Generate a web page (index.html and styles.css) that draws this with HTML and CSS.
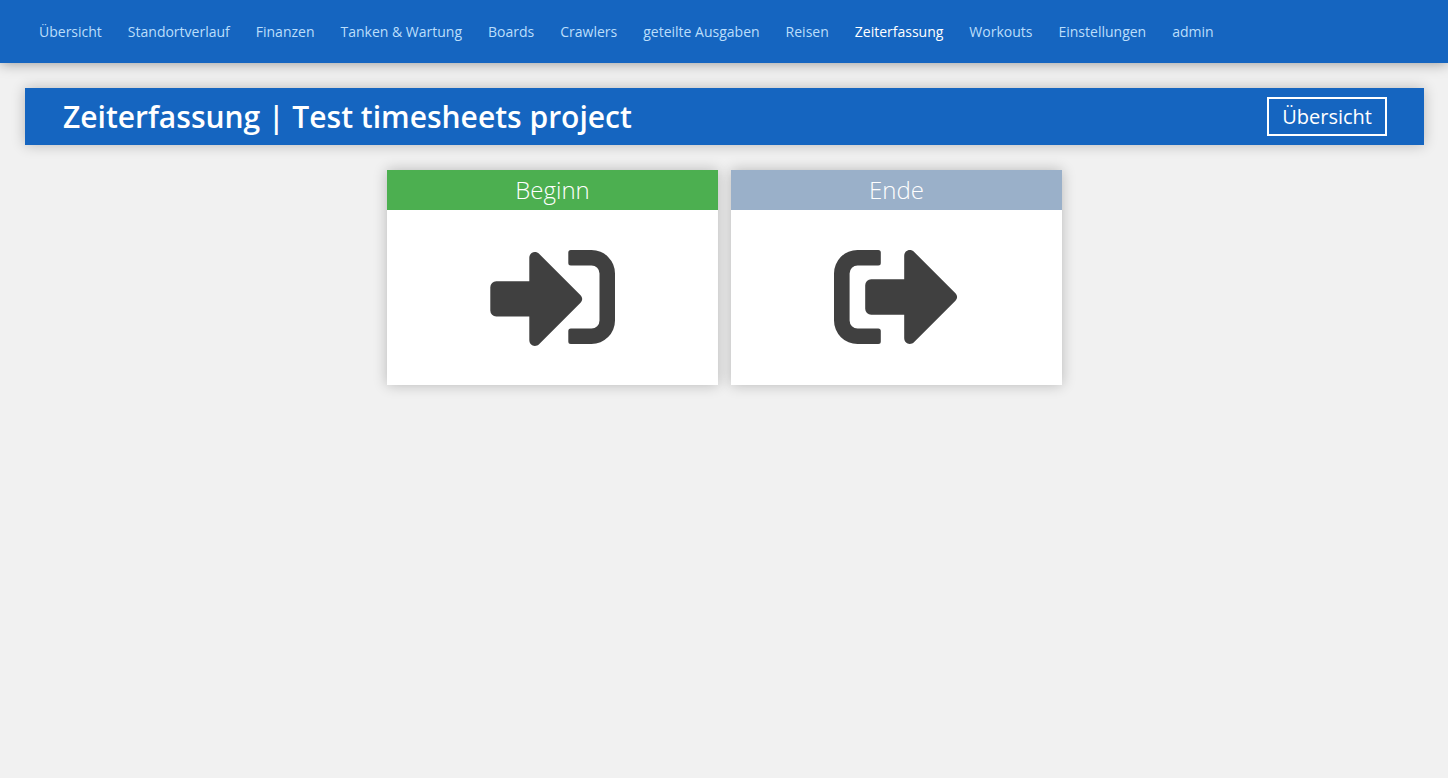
FILE: index.html
```html
<!DOCTYPE html>
<html lang="de">
<head>
<meta charset="utf-8">
<meta name="viewport" content="width=device-width, initial-scale=1">
<title>Zeiterfassung</title>
<link rel="stylesheet" href="styles.css">
</head>
<body>
<nav class="nav">
  <a href="#">Übersicht</a>
  <a href="#">Standortverlauf</a>
  <a href="#">Finanzen</a>
  <a href="#">Tanken &amp; Wartung</a>
  <a href="#">Boards</a>
  <a href="#">Crawlers</a>
  <a href="#">geteilte Ausgaben</a>
  <a href="#">Reisen</a>
  <a href="#" class="active" aria-current="page">Zeiterfassung</a>
  <a href="#">Workouts</a>
  <a href="#">Einstellungen</a>
  <a href="#">admin</a>
</nav>
<main class="main">
  <header class="title-bar">
    <h1>Zeiterfassung | Test timesheets project</h1>
    <a href="#" class="outline-button">Übersicht</a>
  </header>
  <div class="cards">
    <button type="button" class="card">
      <span class="card-title start">Beginn</span>
      <span class="card-body">
        <svg class="icon" viewBox="0 0 128 96" aria-hidden="true">
          <path d="M1.300 39.200a6 6 0 0 1 6-6h33V10c0-5.500 6-8 10-4l41 41c2.500 2.500 2.500 5.500 0 8L50.300 96c-4 4-10 1.500-10-4V68.500h-33a6 6 0 0 1-6-6z"/>
          <path d="M81.800 2h20.700a23.500 23.500 0 0 1 23.500 23.500v47A23.500 23.500 0 0 1 102.500 96H81.800a2.500 2.500 0 0 1-2.500-2.500V83a2.500 2.500 0 0 1 2.500-2.500h20.700a8 8 0 0 0 8-8v-47a8 8 0 0 0-8-8H81.800a2.500 2.500 0 0 1-2.500-2.500V4.500a2.500 2.500 0 0 1 2.500-2.500z"/>
        </svg>
      </span>
    </button>
    <button type="button" class="card">
      <span class="card-title end">Ende</span>
      <span class="card-body">
        <svg class="icon" viewBox="0 0 128 96" aria-hidden="true">
          <path d="M32.200 37.300a6 6 0 0 1 6-6h33V8c0-5.500 6-8 10-4l41 41c2.500 2.500 2.500 5.500 0 8l-41 41c-4 4-10 1.500-10-4V66.700h-33a6 6 0 0 1-6-6z"/>
          <path d="M45.300 2H24.600A23.500 23.500 0 0 0 1 25.500v47A23.500 23.500 0 0 0 24.600 96h20.700a2.500 2.500 0 0 0 2.500-2.500V83a2.500 2.500 0 0 0-2.500-2.500H24.600a8 8 0 0 1-8-8v-47a8 8 0 0 1 8-8h20.700a2.500 2.500 0 0 0 2.500-2.500V4.500a2.500 2.500 0 0 0-2.500-2.500z"/>
        </svg>
      </span>
    </button>
  </div>
</main>
</body>
</html>
```
FILE: styles.css
```css
* { box-sizing: border-box; }
body { margin: 0; background: #f1f1f1; color: #404040; font-family: "Open Sans", sans-serif; }
a { color: inherit; text-decoration: none; }
.nav { display: flex; flex-wrap: wrap; gap: 26px; padding: 20px 39px; background: #1565c0; box-shadow: 0 0 13px rgba(0, 0, 0, 0.4); font-size: 14px; line-height: 23px; color: #bbdefb; }
.nav .active { color: #fff; }
.main { padding: 25px; padding-right: 24px; }
.title-bar { display: flex; align-items: center; justify-content: space-between; padding: 9px 37px 9px 38px; background: #1565c0; color: #fff; box-shadow: 0 0 13px rgba(0, 0, 0, 0.24); }
.title-bar h1 { margin: 0; font-size: 30px; line-height: 39px; font-weight: 600; }
.outline-button { padding: 4px 13px; border: 2px solid #fff; font-size: 20px; line-height: 27px; }
.cards { display: flex; flex-wrap: wrap; justify-content: center; gap: 13px; padding-top: 25px; }
.card { display: flex; flex-direction: column; width: 331px; padding: 0; border: 0; background: #fff; color: inherit; font: inherit; box-shadow: 0 0 13px rgba(0, 0, 0, 0.24); cursor: pointer; }
.card-title { width: 100%; font-size: 24px; line-height: 40px; font-weight: 300; color: #fff; text-align: center; }
.start { background: #4caf50; }
.end { background: #9ab0c9; }
.card-body { display: flex; justify-content: center; width: 100%; padding: 38px 0 41px; }
.icon { width: 128px; height: 96px; overflow: visible; fill: #404040; }
```
